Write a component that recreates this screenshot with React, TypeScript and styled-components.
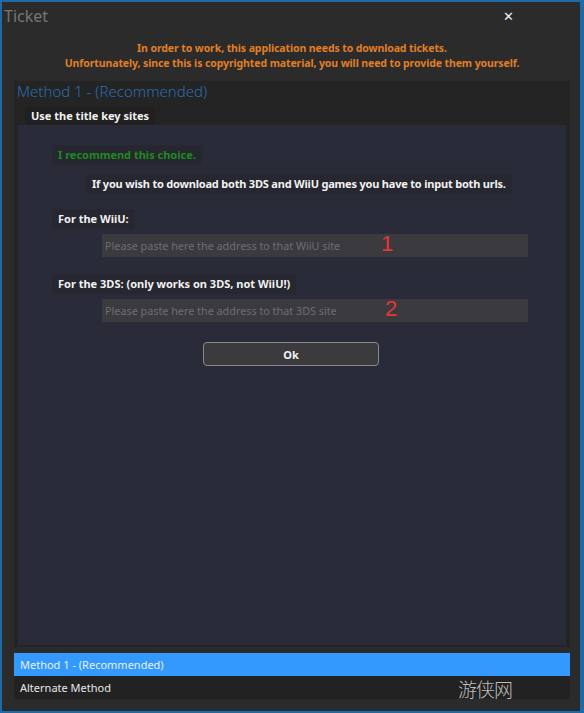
import React from "react";
import styled, { createGlobalStyle } from "styled-components";

const GlobalStyle = createGlobalStyle`
  html, body {
    margin: 0;
    padding: 0;
    background: #2b2b2b;
  }
  body {
    font-family: "Noto Sans", "Open Sans", sans-serif;
  }
`;

const App = () => {
  return (
    <>
      <GlobalStyle />
      <Window>
        <TitleBar>
          <h1>Ticket</h1>
          <CloseButton>✕</CloseButton>
        </TitleBar>
        <Notice>
          <p>In order to work, this application needs to download tickets.</p>
          <p>
            Unfortunately, since this is copyrighted material, you will need to
            provide them yourself.
          </p>
        </Notice>
        <MethodPanel>
          <MethodHeader>Method 1 - (Recommended)</MethodHeader>
          <GroupLegend>Use the title key sites</GroupLegend>
          <GroupBody>
            <Label tone="green">I recommend this choice.</Label>
            <Label indent={34} top={9} tight>
              If you wish to download both 3DS and WiiU games you have to input
              both urls.
            </Label>
            <Field top={15}>
              <Label>For the WiiU:</Label>
              <InputRow>
                <Input placeholder="Please paste here the address to that WiiU site" />
                <Marker style={{ left: 279 }}>1</Marker>
              </InputRow>
            </Field>
            <Field top={17}>
              <Label>For the 3DS: (only works on 3DS, not WiiU!)</Label>
              <InputRow>
                <Input placeholder="Please paste here the address to that 3DS site" />
                <Marker style={{ left: 283 }}>2</Marker>
              </InputRow>
            </Field>
            <OkButton>Ok</OkButton>
          </GroupBody>
        </MethodPanel>
        <TabList>
          <Tab active>Method 1 - (Recommended)</Tab>
          <Tab>Alternate Method</Tab>
          <Watermark>游侠网</Watermark>
        </TabList>
      </Window>
    </>
  );
};

const Window = styled.div`
  box-sizing: border-box;
  width: 584px;
  height: 713px;
  display: flex;
  flex-direction: column;
  background: #2b2b2b;
  border-style: solid;
  border-color: #1d6aa8;
  border-width: 2px 4px 2px 2px;
  padding: 0 10px 12px 12px;
`;

const TitleBar = styled.div`
  height: 28px;
  display: flex;
  align-items: center;
  justify-content: space-between;
  margin-left: -10px;
  h1 {
    margin: 0;
    font-size: 16px;
    font-weight: 400;
    color: #767676;
  }
`;

const CloseButton = styled.span`
  color: #f0f0f0;
  font-size: 13px;
  font-family: "DejaVu Sans", sans-serif;
  margin-right: 56px;
`;

const Notice = styled.div`
  padding: 11px 0 10px;
  text-align: center;
  p {
    margin: 0;
    font-size: 10.5px;
    line-height: 15px;
    font-weight: 700;
    color: #e07f25;
    letter-spacing: -0.1px;
  }
`;

const MethodPanel = styled.div`
  flex: 1;
  display: flex;
  flex-direction: column;
  background: #242424;
  padding: 0 4px 2px 4px;
`;

const MethodHeader = styled.div`
  height: 20px;
  display: flex;
  align-items: center;
  margin-left: -1px;
  font-size: 15px;
  font-weight: 300;
  color: #2b6db0;
`;

const GroupLegend = styled.div`
  align-self: flex-start;
  margin: 6px 0 0 7px;
  padding: 2px 6px;
  background: #202020;
  font-size: 11px;
  font-weight: 700;
  color: #f2f2f2;
  line-height: 14px;
`;

const GroupBody = styled.div`
  flex: 1;
  background: #2a2b38;
  display: flex;
  flex-direction: column;
  align-items: flex-start;
  padding: 20px 0 0 34px;
`;

const Label = styled.div<{
  tone?: "green";
  indent?: number;
  top?: number;
  tight?: boolean;
}>`
  margin: ${(p) => p.top ?? 0}px 0 0 ${(p) => p.indent ?? 0}px;
  padding: 3px 6px;
  background: #262730;
  font-size: 11px;
  font-weight: 700;
  line-height: 14px;
  letter-spacing: ${(p) => (p.tight ? "-0.2px" : "0")};
  color: ${(p) => (p.tone === "green" ? "#1e8a1e" : "#f2f2f2")};
`;

const Field = styled.div<{ top: number }>`
  margin-top: ${(p) => p.top}px;
  display: flex;
  flex-direction: column;
  align-items: flex-start;
  gap: 4px;
`;

const InputRow = styled.div`
  position: relative;
  margin-left: 50px;
`;

const Input = styled.input`
  box-sizing: border-box;
  width: 426px;
  height: 23px;
  border: none;
  outline: none;
  background: #3a3a3f;
  padding: 0 3px;
  font-family: "Noto Sans", sans-serif;
  font-size: 10.8px;
  color: #ddd;
  &::placeholder {
    color: #6e6e72;
  }
`;

const Marker = styled.span`
  position: absolute;
  top: -3px;
  font-size: 22px;
  line-height: 28px;
  color: #e2383a;
  font-family: "Liberation Sans", sans-serif;
`;

const OkButton = styled.button`
  box-sizing: border-box;
  margin: 20px 0 0 151px;
  width: 176px;
  height: 24px;
  border: 1px solid #8a8a8e;
  border-radius: 4px;
  background: #3b3b3e;
  color: #f2f2f2;
  font-family: "Noto Sans", sans-serif;
  font-size: 11px;
  font-weight: 700;
`;

const TabList = styled.div`
  position: relative;
  margin-top: 6px;
  background: #222222;
  display: flex;
  flex-direction: column;
`;

const Tab = styled.div<{ active?: boolean }>`
  height: 23px;
  display: flex;
  align-items: center;
  padding-left: 6px;
  font-size: 11px;
  color: ${(p) => (p.active ? "#e6f1ff" : "#e8e8e8")};
  background: ${(p) => (p.active ? "#3399ff" : "transparent")};
`;

const Watermark = styled.span`
  position: absolute;
  right: 58px;
  bottom: -3px;
  font-family: "Noto Sans CJK SC", sans-serif;
  font-size: 19px;
  font-weight: 300;
  color: rgba(220, 220, 220, 0.85);
  letter-spacing: -1px;
`;

export default App;
